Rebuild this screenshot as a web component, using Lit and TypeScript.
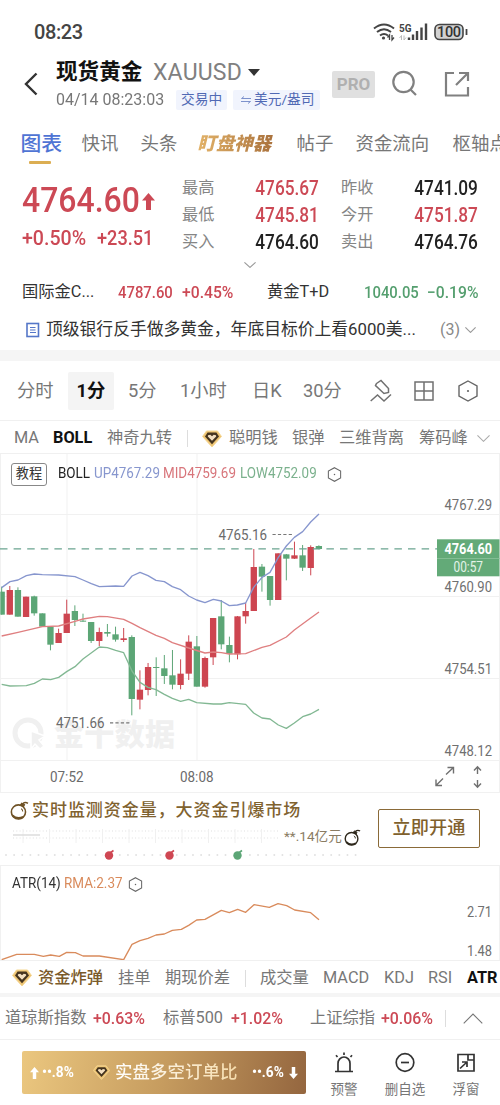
import { LitElement, html, svg, css } from "lit";
import { customElement } from "lit/decorators.js";

type Candle = [string, number, number, number, number];
type Point = [number, number];

// Price plot units: three per pixel, origin 36px below the chart's top edge.
const CANDLES: Candle[] = [
  ["g", 290, 305, 374, 374], ["r", 288, 300, 374, 374], ["g", 292, 300, 380, 380], ["r", 320, 320, 381, 381],
  ["g", 317, 319, 370, 377], ["g", 370, 370, 410, 410], ["g", 410, 410, 464, 481], ["r", 416, 429, 459, 459],
  ["r", 329, 371, 429, 429], ["g", 346, 363, 390, 408], ["g", 371, 392, 395, 395], ["g", 396, 396, 453, 459],
  ["r", 413, 426, 453, 468], ["g", 402, 426, 431, 440], ["g", 410, 433, 449, 455], ["r", 414, 445, 450, 456],
  ["g", 436, 441, 627, 676], ["r", 541, 599, 629, 658], ["r", 519, 531, 600, 616], ["g", 502, 531, 534, 618],
  ["g", 495, 535, 558, 582], ["g", 480, 556, 584, 598], ["r", 508, 551, 585, 598], ["r", 436, 455, 551, 570],
  ["g", 438, 469, 590, 590], ["r", 500, 504, 590, 593], ["r", 384, 384, 502, 525], ["g", 330, 379, 463, 478],
  ["g", 440, 465, 491, 517], ["r", 378, 379, 493, 508], ["r", 338, 363, 379, 401], ["r", 177, 231, 363, 363],
  ["g", 222, 230, 260, 305], ["g", 258, 258, 330, 347], ["r", 190, 190, 330, 330], ["g", 192, 193, 206, 271],
  ["r", 155, 196, 206, 207], ["g", 165, 196, 233, 243], ["r", 166, 171, 234, 256], ["g", 166, 168, 177, 178],
];

const UPPER: Point[] = [[5, 293], [30, 275], [54, 270], [79, 257], [103, 252], [127, 254], [176, 255], [225, 260], [249, 270], [274, 281], [298, 290], [347, 288], [371, 289], [396, 258], [420, 247], [444, 257], [468, 271], [493, 275], [517, 290], [542, 299], [566, 318], [590, 330], [615, 338], [640, 328], [664, 333], [688, 347], [712, 345], [737, 339], [761, 292], [786, 262], [810, 247], [835, 202], [859, 168], [883, 142], [908, 125], [932, 96], [957, 72]];
const MIDDLE: Point[] = [[5, 438], [54, 427], [127, 410], [176, 408], [225, 394], [249, 387], [298, 379], [322, 380], [371, 388], [396, 400], [420, 413], [468, 436], [493, 445], [517, 458], [566, 474], [615, 489], [640, 486], [664, 488], [688, 492], [737, 491], [786, 472], [810, 466], [859, 441], [883, 420], [932, 384], [957, 366]];
const LOWER: Point[] = [[5, 583], [30, 588], [79, 587], [103, 580], [127, 567], [152, 569], [176, 562], [200, 545], [225, 530], [249, 507], [298, 471], [322, 473], [347, 481], [371, 488], [396, 543], [420, 577], [444, 592], [468, 599], [493, 613], [517, 625], [542, 634], [566, 628], [590, 638], [640, 642], [664, 642], [688, 638], [737, 643], [761, 669], [786, 684], [810, 687], [835, 705], [859, 715], [883, 699], [908, 680], [932, 672], [957, 658]];
const ATR: Point[] = [[5, 539], [50, 523], [103, 523], [130, 529], [152, 525], [178, 529], [200, 517], [226, 518], [249, 528], [298, 528], [371, 539], [396, 493], [420, 482], [444, 475], [468, 465], [493, 462], [517, 451], [544, 448], [566, 436], [590, 420], [615, 418], [664, 391], [688, 398], [713, 388], [737, 397], [762, 374], [808, 382], [834, 371], [860, 377], [884, 390], [932, 398], [957, 419]];

const pts = (p: Point[]) => p.map((q) => q.join(",")).join(" ");

const hexIcon = (size: number, sw: number) => html`<svg width=${size} height=${size} viewBox="0 0 22 22" fill="none" stroke="#666" stroke-width=${sw}>
  <path d="M11 1 L20 6 V16 L11 21 L2 16 V6 Z" /><circle cx="11" cy="11" r="1.1" fill="#666" stroke="none" /></svg>`;

const gem = (w: number) => html`<svg class="gem" width=${w} height=${w * 0.88} viewBox="0 0 20 17.6">
  <path d="M4.5 1 H15.5 L19.5 6.5 L10 17 L.5 6.5 Z" fill="#eec473" stroke="#f5d794" stroke-width="1" />
  <path d="M5.6 2.6 H14.4 L17 6.6 L10 14.2 L3 6.6 Z" fill="#45341e" />
  <path d="M6 5.2 L8.3 4.8 L10 6.2 L11.7 4.8 L14 5.2 L14.2 6.4 L10 10.8 L5.800 6.400 Z" fill="#f3dfc0" /></svg>`;

const bomb = (size: number, c: string) => html`<svg width=${size} height=${size} viewBox="0 0 18 18" fill="none" stroke=${c}>
  <circle cx="8" cy="10.4" r="6.7" stroke-width="1.5" /><path d="M2.3 13.600 Q6.500 18 12.500 15.2" stroke-width="2" />
  <path d="M9.6 4.2 L11 2 L13.8 3.6 L12.6 5.600" fill=${c} stroke-width="1" /><path d="M12 2.6 Q14.5 .4 17 2.2" stroke-width="1.4" /><path d="M10.6 7.200 Q12.2 8.4 12 10" stroke-width="1" /></svg>`;

const chevron = (w: number, h: number, up = false, c = "#999") => html`<svg width=${w} height=${h} viewBox="0 0 14 8" fill="none" stroke=${c} stroke-width="1.1" preserveAspectRatio="none"><path d=${up ? "M.5 7.5 L7 .8 L13.5 7.5" : "M.5 .5 L7 7.2 L13.5 .5"} vector-effect="non-scaling-stroke" /></svg>`;

@customElement("price-chart")
class PriceChart extends LitElement {
  static styles = css`
    :host { display: block; height: 339px; }
    svg { display: block; font-family: Roboto, "Noto Sans CJK SC", sans-serif; }
    .grid { stroke: #f1f1f1; stroke-width: 1; }
    .axis { font-size: 15px; fill: #707070; }
    .g { fill: #5ca676; stroke: #5ca676; }
    .r { fill: #cd4550; stroke: #cd4550; }
    .line { fill: none; stroke-width: 4; stroke-linejoin: round; }
    .mark { font-size: 30px; font-weight: 900; fill: #f0f0f0; }
    .price { font-size: 15px; font-weight: 700; fill: #fff; }
    .count { font-size: 14.5px; fill: #e4f3e8; }
  `;

  render() {
    const axis: [string, number][] = [["4767.29", 509.5], ["4760.90", 592], ["4754.51", 674], ["4748.12", 756]];
    return html`<svg width="500" height="339" viewBox="0 454 500 339">
      ${[514.5, 596.5, 678.5, 760.5, 792.5].map((y) => svg`<path class="grid" d="M0 ${y} H500" />`)}
      ${[67, 197].map((x) => svg`<path class="grid" d="M${x} 454 V760" />`)}
      <path class="grid" d="M.5 454 V793 M499.5 454 V793" />
      <g>
        <circle cx="28" cy="733" r="13" fill="none" stroke="#f0f0f0" stroke-width="5" />
        <path d="M31 731 L45 736 L39 740 L44 746 L40 749 L35 744 L31 749 Z" fill="#f0f0f0" stroke="#fff" stroke-width="1.5" />
        <text class="mark" x="54" y="745" textLength="121">金十数据</text>
      </g>
      <g transform="translate(0 490) scale(.33333)">
        ${CANDLES.map(([c, hi, top, bot, lo], i) => {
          const x = 5 + i * 24.4;
          const left = Math.max(x - 9.5, 1);
          return svg`<g class=${c}><path d="M${x} ${hi} V${lo}" stroke-width="3" /><rect x=${left} y=${top} width=${x + 9.5 - left} height=${bot - top} stroke="none" /></g>`;
        })}
        <polyline class="line" stroke="#8796ce" points=${pts(UPPER)} />
        <polyline class="line" stroke="#df7f80" points=${pts(MIDDLE)} />
        <polyline class="line" stroke="#82b893" points=${pts(LOWER)} />
      </g>
      <path d="M0 548.9 H437" stroke="#6aa490" stroke-width="1.4" stroke-dasharray="7.5 6.1" />
      <g fill="#6b6b6b" font-size="15">
        <text x="218.500" y="539.5" textLength="48.500" lengthAdjust="spacingAndGlyphs">4765.16</text>
        <text x="56" y="727.5" textLength="48.500" lengthAdjust="spacingAndGlyphs">4751.66</text>
        <text x="50" y="782" textLength="33.500" lengthAdjust="spacingAndGlyphs">07:52</text>
        <text x="180" y="782" textLength="33.500" lengthAdjust="spacingAndGlyphs">08:08</text>
      </g>
      <path d="M272.500 534.500 H293 M110 722.800 H130" stroke="#777" stroke-width="1.200" stroke-dasharray="3.200 2.200" />
      ${axis.map(([t, y]) => svg`<text class="axis" x="444.500" y=${y} textLength="47.500" lengthAdjust="spacingAndGlyphs">${t}</text>`)}
      <rect x="437" y="539.300" width="62.500" height="37" fill="#63aa78" />
      <path d="M437 558.500 H499.500" stroke="#83bd94" />
      <text class="price" x="444.500" y="554.300" textLength="47.500" lengthAdjust="spacingAndGlyphs">4764.60</text>
      <text class="count" x="453.500" y="572.300" textLength="29.500" lengthAdjust="spacingAndGlyphs">00:57</text>
      <g fill="none" stroke="#707070" stroke-width="1.400">
        <path d="M446 774.500 L453.500 767.500 M447.500 767.500 H453.500 V773.500 M443 778.500 L436 785.500 M436 779.500 V785.500 H442" />
        <path d="M477.500 774 V767 M474 770.500 L477.500 766.800 L481 770.500 M477.500 780 V787 M474 783.500 L477.500 787.200 L481 783.500" />
      </g>
    </svg>`;
  }
}

@customElement("app-root")
class AppRoot extends LitElement {
  static styles = css`
    :host { display: block; width: 500px; height: 1105px; overflow: hidden; background: #fff; color: #777; font-family: Roboto, "Noto Sans CJK SC", sans-serif; font-size: 16px; line-height: 1; white-space: nowrap; }
    * { box-sizing: border-box; }
    svg { display: block; flex: none; }
    .n { display: inline-block; transform: scaleX(.885); transform-origin: 0 50%; font-weight: 500; }
    .n.end { transform-origin: 100% 50%; }
    .n.pct { transform: scaleX(.935); }
    .red { color: #cc4955; } .green { color: #559f6f; } .black { color: #222; }
    .row { display: grid; align-items: center; }

    .status { display: flex; align-items: center; height: 50px; padding: 14px 0 0 34px; }
    .clock { font-size: 20px; font-weight: 500; color: #444; width: 339px; letter-spacing: -.4px; }

    .head { display: grid; grid-template-columns: 56px 276px 58px 54px 30px; align-items: center; height: 70px; }
    .back { padding: 0 0 2px 24px; }
    .title { display: flex; align-items: center; height: 29px; }
    .name { font-size: 21.6px; font-weight: 700; color: #111; width: 97px; }
    .code { font-size: 23px; width: 95px; letter-spacing: .2px; color: #808080; font-weight: 400; }
    .sub { display: grid; grid-template-columns: 120px 57px 87px; height: 26px; align-items: center; }
    .date { font-size: 17px; color: #777; transform: scaleX(.94); transform-origin: 0 50%; }
    .tag { display: flex; align-items: center; height: 20px; padding: 0 5px; background: #f1f4fd; color: #5069b4; font-size: 13.7px; border-radius: 2px; width: 51px; }
    .tag.wide { width: 87px; gap: 3px; padding-left: 8px; }
    .pro { display: grid; place-items: center; width: 43px; height: 27px; margin-bottom: 2px; border-radius: 2px; background: #e0e0e0; color: #b0b0b0; font-size: 17px; font-weight: 700; }
    .tool { margin-bottom: 2px; }

    .tabs { grid-template-columns: 61px 59px 57px 99px 59px 97px 60px; padding-left: 20.5px; height: 42px; padding-top: 6px; font-size: 18.4px; }
    .tabs .on { color: #4f74d4; font-size: 20.8px; font-weight: 500; }
    .tabs .hot { font-weight: 900; font-size: 18.4px; font-style: italic; background: linear-gradient(90deg, #e2b268, #a8703c); background-clip: text; -webkit-background-clip: text; color: transparent; width: 78px; padding: 4px 0; line-height: 1.1; }
    .bar { width: 22px; height: 3px; margin: -1px 0 0 29px; background: #dcae52; border-radius: 1px; }

    .quote { display: grid; grid-template-columns: 160px 137px 22px 137px; padding: 11px 0 0 22px; height: 94px; }
    .big { display: flex; height: 52px; align-items: center; }
    .last { font-size: 35.5px; transform: scaleX(.9); transform-origin: 0 50%; font-weight: 500; width: 120px; }
    .chg { display: grid; grid-template-columns: 75px 80px; font-size: 20.5px; height: 23px; align-items: center; }
    .chg .n.pct { transform: scaleX(.955); }
    .stats { display: grid; grid-template-columns: 1fr auto; grid-auto-rows: 27px; align-items: center; }
    .stats .k { font-size: 16.2px; color: #858585; }
    .stats .n { font-size: 19.500px; }
    .more { display: flex; justify-content: center; height: 13px; align-items: center; }

    .pairs { grid-template-columns: 96px 64px 85px 97px 63px 60px; padding: 2px 0 0 22px; height: 40px; font-size: 16.3px; color: #333; }
    .pairs .n { font-size: 16.800px; }
    .news { grid-template-columns: 20px 394px 25px 20px; padding: 0 0 2px 26px; height: 39px; font-size: 16.8px; color: #333; }
    .news .cnt { color: #888; font-size: 16px; }
    .strip { height: 11px; background: #f5f5f5; }

    .periods { grid-template-columns: 51px 60px 52px 72px 51px 67px 44px 43px 30px; padding: 1px 0 0 17px; height: 60px; font-size: 18.3px; border-bottom: 1px solid #f0f0f0; }
    .periods .on { display: grid; place-items: center; width: 46px; height: 38px; background: #f4f4f4; color: #111; font-weight: 700; border-radius: 2px; }
    .inds { grid-template-columns: 39px 54px 80px 15px 27px 63px 47px 80px 58px 20px; padding: 3px 0 0 14px; height: 33px; font-size: 16.300px; border-bottom: 1px solid #f0f0f0; }
    .b { font-weight: 700; color: #111; }
    .sep { width: 1px; height: 17px; background: #ddd; }

    .stage { display: grid; }
    .stage > * { grid-area: 1 / 1; }
    .legend { z-index: 1; display: grid; grid-template-columns: 47px 36px 69px 77px 87px 20px; align-items: center; height: 40px; padding-left: 11px; font-size: 14.500px; }
    .legend .s { transform: scaleX(.925); transform-origin: 0 50%; }
    .how { width: 36px; height: 23px; border: 1px solid #888; border-radius: 3px; display: grid; place-items: center; color: #333; font-size: 13.2px; }
    .up { color: #8796ce; } .mid { color: #d8757b; } .low { color: #7bb18d; }

    .promo { display: grid; grid-template-columns: 378px 102px; height: 73px; align-items: center; border-bottom: 1px solid #f0f0f0; }
    .pitch { display: flex; align-items: center; gap: 3px; height: 34px; padding-left: 10px; color: #80622f; font-size: 17px; font-weight: 500; letter-spacing: .95px; }
    .ruler { display: grid; grid-template-columns: 284px 60px 20px; height: 19px; align-items: center; font-size: 13.6px; color: #8a7c63; }
    .cta { display: grid; place-items: center; height: 39px; margin-bottom: 2px; border: 1.500px solid #8a6a38; border-radius: 2px; color: #80602c; font-size: 18.2px; font-weight: 500; }

    .atr { display: grid; height: 94px; }
    .atr > * { grid-area: 1 / 1; }
    .alegend { display: grid; grid-template-columns: 52px 64px 20px; padding-left: 12px; height: 37px; align-items: center; font-size: 14.500px; color: #333; }
    .alegend .s { transform: scaleX(.93); transform-origin: 0 50%; }
    .orange { color: #d98b5c; }
    .axis { font-size: 15px; fill: #707070; }

    .subs { grid-template-columns: 26px 80px 47px 80px 15px 63px 61px 44px 39px 34px; padding: 2px 0 0 12px; height: 33px; font-size: 16.300px; border-top: 1px solid #f0f0f0; }
    .subs .gold { color: #7a5a2a; font-weight: 500; }
    .thin { height: 4px; background: #f5f5f5; }
    .index { grid-template-columns: 88px 68px 68px 79px 71px 64px 18px 22px; grid-template-columns: 88px 70px 68px 79px 71px 64px 18px 22px; padding-left: 5px; height: 43px; font-size: 16.300px; border-bottom: 1px solid #f0f0f0; }
    .index .n { font-size: 17px; }
    .foot { display: grid; grid-template-columns: 284px 76px 46px 76px; padding: 11px 0 0 22px; align-items: start; }
    .ratio { display: grid; grid-template-columns: 12px 51px 22px 137px 37px 10px; align-items: center; height: 43px; padding-left: 8px; border-radius: 2px; color: #fff; background: linear-gradient(100deg, #ebc77f, #c69c5f 50%, #94663f); }
    .ratio .n { font-size: 15.500px; font-weight: 700; }
    .ratio .t { font-size: 17.500px; font-weight: 500; background: linear-gradient(90deg, #fff, #f5d9a4); background-clip: text; -webkit-background-clip: text; color: transparent; line-height: 1.3; }
    .act { display: flex; flex-direction: column; align-items: center; gap: 9.500px; font-size: 13.500px; padding-top: 1px; }
  `;

  private num(t: string, cls = "") {
    return html`<span class="n ${cls}">${t}</span>`;
  }

  render() {
    return html`
      <div class="status">
        <span class="clock">08:23</span>
        <svg width="96" height="20" viewBox="373 22 96 20" fill="none" stroke="#444">
          <path d="M374 28.500 Q384 20.500 394 28.500 M377 32 Q384 26.500 391 32 M380 35.500 Q384 32.500 388 35.500" stroke-width="2" />
          <circle cx="383.500" cy="38" r="1.600" fill="#444" stroke="none" />
          <path d="M389.500 40 V35 L387.500 37.500 M392 35 V40 L394 37.500" stroke-width="1.300" />
          <text x="399" y="31.500" font-size="10.500" font-weight="700" fill="#444" stroke="none" textLength="12.500" lengthAdjust="spacingAndGlyphs">5G</text>
          <path d="M401.500 40 V35.500 L399.500 38 M404 35.500 V40 L406 37.500" stroke="#bbb" stroke-width="1" />
          <path d="M409 40 V37.500 M413 40 V34.500 M417 40 V31 M421.500 40 V27.500 M426 40 V23.500" stroke-width="2.400" />
          <rect x="435" y="24.500" width="28" height="15" rx="4.500" fill="#d2d2d2" stroke-width="1.600" />
          <path d="M466.500 29 V35" stroke-width="1.800" />
          <text x="437" y="37.300" font-size="14.500" font-weight="500" fill="#333" stroke="none" textLength="24">100</text>
        </svg>
      </div>

      <div class="head">
        <div class="back"><svg width="14" height="24" viewBox="0 0 14 24" fill="none" stroke="#333" stroke-width="2.400"><path d="M12.500 1.500 L2 12 L12.500 22.500" /></svg></div>
        <div>
          <div class="title"><span class="name">现货黄金</span><span class="code">XAUUSD</span><svg width="12" height="7" viewBox="0 0 12 7"><path d="M0 0 H12 L6 7 Z" fill="#333" /></svg></div>
          <div class="sub"><span class="date">04/14 08:23:03</span><span class="tag">交易中</span>
            <span class="tag wide"><svg width="10" height="8" viewBox="0 0 10 8" fill="none" stroke="#7d92cc"><path d="M3 .5 L0.500 2.500 H10 M0 5.500 H9.500 L7 7.500" /></svg><span>美元/盎司</span></span></div>
        </div>
        <span class="pro">PRO</span>
        <svg class="tool" width="28" height="28" viewBox="0 0 28 28" fill="none" stroke="#808080" stroke-width="2.200"><circle cx="13.500" cy="12" r="10.200" /><path d="M20.500 19.500 L26 25" /></svg>
        <svg class="tool" width="26" height="26" viewBox="0 0 26 26" fill="none" stroke="#808080" stroke-width="2.200"><path d="M10 2 H2 V24.500 H24 V16 M15 2 H24 V10 M24 2 L12 14" /></svg>
      </div>

      <div class="row tabs"><span class="on">图表</span><span>快讯</span><span>头条</span><span class="hot">盯盘神器</span><span>帖子</span><span>资金流向</span><span>枢轴点</span></div>
      <div class="bar"></div>

      <div class="quote">
        <div>
          <div class="big red"><span class="last">4764.60</span><svg width="13" height="17" viewBox="0 0 13 17"><path d="M6.500 0 L13 7.500 H9 V17 H4 V7.500 H0 Z" fill="#cc4955" /></svg></div>
          <div class="chg red">${this.num("+0.50%", "pct")}${this.num("+23.51")}</div>
        </div>
        <div class="stats">
          <span class="k">最高</span>${this.num("4765.67", "end red")}
          <span class="k">最低</span>${this.num("4745.81", "end red")}
          <span class="k">买入</span>${this.num("4764.60", "end black")}
        </div>
        <span></span>
        <div class="stats">
          <span class="k">昨收</span>${this.num("4741.09", "end black")}
          <span class="k">今开</span>${this.num("4751.87", "end red")}
          <span class="k">卖出</span>${this.num("4764.76", "end black")}
        </div>
      </div>
      <div class="more">${chevron(12, 6)}</div>

      <div class="row pairs"><span>国际金C...</span>${this.num("4787.60", "red")}${this.num("+0.45%", "red pct")}<span>黄金T+D</span>${this.num("1040.05", "green")}${this.num("−0.19%", "green pct")}</div>
      <div class="row news">
        <svg width="14" height="16" viewBox="0 0 14 16" fill="none" stroke="#5577c8" stroke-width="1.600"><rect x="1" y="1.500" width="11.500" height="13" /><path d="M4 5.500 H9.500 M4 10.500 H10 M4 8 H9.500" stroke-width="1.200" /></svg>
        <span>顶级银行反手做多黄金，年底目标价上看6000美...</span><span class="cnt">(3)</span>${chevron(11, 6)}
      </div>
      <div class="strip"></div>

      <div class="row periods"><span>分时</span><span class="on">1分</span><span>5分</span><span>1小时</span><span>日K</span><span>30分</span>
        <svg width="22" height="24" viewBox="0 0 22 24" fill="none" stroke="#707070" stroke-width="1.500"><path d="M6.500 4.500 L11 1.500 L18.500 9.500 V13.500 L14 14.500 L5.500 6.500 Z M.7 22 L7.500 16 L14 22 L21 15.500" /></svg>
        <svg width="20" height="20" viewBox="0 0 20 20" fill="none" stroke="#707070" stroke-width="1.500"><path d="M1 1 H19 V19 H1 Z M10 1 V19 M1 10 H19" /></svg>
        ${hexIcon(22, 1.4)}
      </div>
      <div class="row inds"><span>MA</span><span class="b">BOLL</span><span>神奇九转</span><span class="sep"></span>${gem(20)}<span>聪明钱</span><span>银弹</span><span>三维背离</span><span>筹码峰</span>${chevron(13, 7, false, "#aaa")}</div>

      <div class="stage">
        <price-chart></price-chart>
        <div class="legend"><span class="how">教程</span><span class="s black">BOLL</span><span class="s up">UP4767.29</span><span class="s mid">MID4759.69</span><span class="s low">LOW4752.09</span>${hexIcon(15, 1.5)}</div>
      </div>

      <div class="promo">
        <div>
          <div class="pitch">${bomb(19, "#6f5226")}<span>实时监测资金量，大资金引爆市场</span></div>
          <div class="ruler">
            <svg width="284" height="19" viewBox="0 0 284 19" fill="none"><path d="M13 3 H280 M13 10 H280" stroke="#eaeaea" stroke-width="1.500" stroke-dasharray="1 2.300" /><path d="M23 1 V15 M49.500 1 V15 M76 1 V15 M102.500 1 V15 M129 1 V15 M155.500 1 V15 M182 1 V15 M208.500 1 V15 M235 1 V15 M261.500 1 V15" stroke="#f0f0f0" /><path d="M13 7 H40" stroke="#ddd" stroke-width="1.500" /></svg>
            <span>**.14亿元</span>${bomb(17, "#2e281c")}
          </div>
          <svg width="378" height="18" viewBox="0 0 378 18"><path d="M6 8 H358" stroke="#e2e2e2" stroke-width="2" stroke-linecap="round" stroke-dasharray="0 8.130" />
            ${([[109, "#cf4753"], [169.500, "#cf4753"], [237.500, "#5ca676"]] as [number, string][]).map(([x, c]) => svg`<g><circle cx=${x} cy="8" r="6" fill="#fff" /><circle cx=${x} cy="8.500" r="4.200" fill=${c} /><path d="M${x + 1} 6 L${x + 4.5} 3.500" stroke=${c} stroke-width="1.600" /></g>`)}
          </svg>
        </div>
        <div class="cta">立即开通</div>
      </div>

      <div class="atr">
        <svg width="500" height="94" viewBox="0 866 500 94">
          <path d="M.5 866 V960 M499.500 866 V960" stroke="#f1f1f1" />
          <polyline transform="translate(0 780) scale(.33333)" fill="none" stroke="#d98b5c" stroke-width="4" stroke-linejoin="round" points=${pts(ATR)} />
          <text class="axis" x="467" y="917" textLength="25" lengthAdjust="spacingAndGlyphs">2.71</text>
          <text class="axis" x="467" y="956" textLength="25" lengthAdjust="spacingAndGlyphs">1.48</text>
        </svg>
        <div class="alegend"><span class="s">ATR(14)</span><span class="s orange">RMA:2.37</span>${hexIcon(15, 1.5)}</div>
      </div>

      <div class="row subs">${gem(20)}<span class="gold">资金炸弹</span><span>挂单</span><span>期现价差</span><span class="sep"></span><span>成交量</span><span>MACD</span><span>KDJ</span><span>RSI</span><span class="b">ATR</span></div>
      <div class="thin"></div>
      <div class="row index"><span>道琼斯指数</span>${this.num("+0.63%", "red pct")}<span>标普500</span>${this.num("+1.02%", "red pct")}<span>上证综指</span>${this.num("+0.06%", "red pct")}<span class="sep"></span>${chevron(20, 11, true, "#777")}</div>

      <div class="foot">
        <div class="ratio">
          <svg width="9" height="12" viewBox="0 0 13 17"><path d="M6.500 0 L13 7.500 H9 V17 H4 V7.500 H0 Z" fill="#fff" /></svg>${this.num("••.8%")}
          ${gem(17)}<span class="t">实盘多空订单比</span>${this.num("••.6%")}
          <svg width="9" height="12" viewBox="0 0 13 17"><path d="M6.500 17 L13 9.500 H9 V0 H4 V9.500 H0 Z" fill="#fff" /></svg>
        </div>
        <div class="act"><svg width="20" height="21" viewBox="0 0 20 21" fill="none" stroke="#333" stroke-width="1.700"><path d="M1 19.500 H19 M4 19.500 V11.500 A6 6.500 0 0 1 16 11.500 V19.500 M10 3 V.5 M3.500 5 L2 3.300 M16.500 5 L18 3.300" /></svg><span>预警</span></div>
        <div class="act"><svg width="20" height="21" viewBox="0 0 20 21" fill="none" stroke="#333" stroke-width="1.700"><circle cx="10" cy="10.500" r="8.800" /><path d="M6 10.500 H14" /></svg><span>删自选</span></div>
        <div class="act"><svg width="20" height="21" viewBox="0 0 20 21" fill="none" stroke="#333" stroke-width="1.700"><path d="M2 2.500 H18 V19 H2 Z M12 2.500 V8 H18 M4 16.500 L10.500 10.500 M6 10 H11 V15" /></svg><span>浮窗</span></div>
      </div>
    `;
  }
}
